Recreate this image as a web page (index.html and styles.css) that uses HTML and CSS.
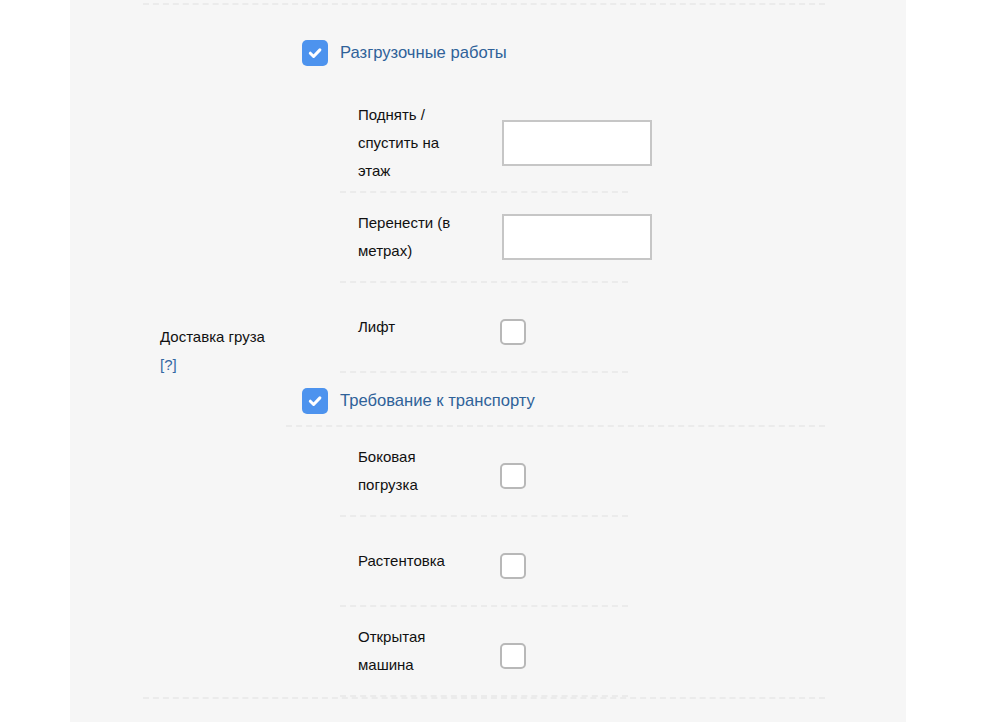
FILE: index.html
```html
<!DOCTYPE html>
<html lang="ru">
<head>
<meta charset="utf-8">
<title>Доставка груза</title>
<link rel="stylesheet" href="styles.css">
</head>
<body>
<div class="panel">
  <div class="outer-row">
    <div class="outer-label">
      <div>Доставка груза</div>
      <a class="help" href="#">[?]</a>
    </div>
    <div class="outer-content">
      <div class="group-head head-first">
        <span class="cb cb-on"><svg viewBox="0 0 26 26" width="26" height="26"><path d="M8.3 13.2l3.3 3.3 6.3-6.6" fill="none" stroke="#fff" stroke-width="3" stroke-linecap="round" stroke-linejoin="round"/></svg></span>
        <span class="group-title">Разгрузочные работы</span>
      </div>
      <div class="sub-row sub-first">
        <div class="sub-label">Поднять / спустить на этаж</div>
        <div class="field"></div>
      </div>
      <div class="sub-row">
        <div class="sub-label">Перенести (в метрах)</div>
        <div class="field"></div>
      </div>
      <div class="sub-row">
        <div class="sub-label">Лифт</div>
        <span class="cb cb-off"></span>
      </div>
      <div class="group-head head-second">
        <span class="cb cb-on"><svg viewBox="0 0 26 26" width="26" height="26"><path d="M8.3 13.2l3.3 3.3 6.3-6.6" fill="none" stroke="#fff" stroke-width="3" stroke-linecap="round" stroke-linejoin="round"/></svg></span>
        <span class="group-title">Требование к транспорту</span>
      </div>
      <div class="sub-row">
        <div class="sub-label">Боковая погрузка</div>
        <span class="cb cb-off"></span>
      </div>
      <div class="sub-row">
        <div class="sub-label">Растентовка</div>
        <span class="cb cb-off"></span>
      </div>
      <div class="sub-row">
        <div class="sub-label">Открытая машина</div>
        <span class="cb cb-off"></span>
      </div>
    </div>
  </div>
</div>
</body>
</html>
```

FILE: styles.css
```css
html, body {
  margin: 0;
  padding: 0;
  background: #ffffff;
}
body {
  font-family: "Liberation Sans", Arial, sans-serif;
  font-size: 15px;
  color: #111;
  height: 722px;
  overflow: hidden;
}
.panel {
  margin-left: 70px;
  width: 836px;
  min-height: 722px;
  background: #f6f6f6;
  padding: 3px 81px 0 73px;
  box-sizing: border-box;
}
.outer-row {
  display: flex;
  border-top: 2px dashed #ebebeb;
  border-bottom: 2px dashed #ebebeb;
}
.outer-label {
  width: 143px;
  flex: none;
  padding-left: 17px;
  box-sizing: border-box;
  line-height: 28px;
  align-self: center;
}
.help {
  color: #3468a3;
  text-decoration: none;
}
.outer-content {
  flex: 1;
}
.group-head {
  display: flex;
  align-items: center;
  padding-left: 16px;
}
.head-first {
  padding-top: 35px;
  padding-bottom: 19px;
}
.head-second {
  padding-top: 15px;
  padding-bottom: 11px;
  border-bottom: 2px dashed #ebebeb;
}
.group-title {
  margin-left: 12px;
  font-size: 16.6px;
  color: #2f6299;
}
.cb {
  width: 26px;
  height: 26px;
  box-sizing: border-box;
  border-radius: 5px;
  flex: none;
  display: block;
}
.cb svg {
  display: block;
}
.cb-on {
  background: #4d93ee;
}
.cb-off {
  background: #fff;
  border: 2px solid #b8b8b8;
  margin-top: 10px;
}
.sub-row {
  margin-left: 54px;
  width: 288px;
  box-sizing: border-box;
  display: flex;
  align-items: center;
  padding: 16px 0 16px 18px;
  min-height: 90px;
  border-bottom: 2px dashed #ebebeb;
}
.sub-first {
  padding-bottom: 6px;
}
.sub-label {
  width: 142px;
  padding-right: 40px;
  box-sizing: border-box;
  flex: none;
  line-height: 28px;
}
.field {
  flex: none;
  margin-left: 2px;
  width: 150px;
  height: 46px;
  box-sizing: border-box;
  background: #fff;
  border: 2px solid #c6c6c6;
}
```
